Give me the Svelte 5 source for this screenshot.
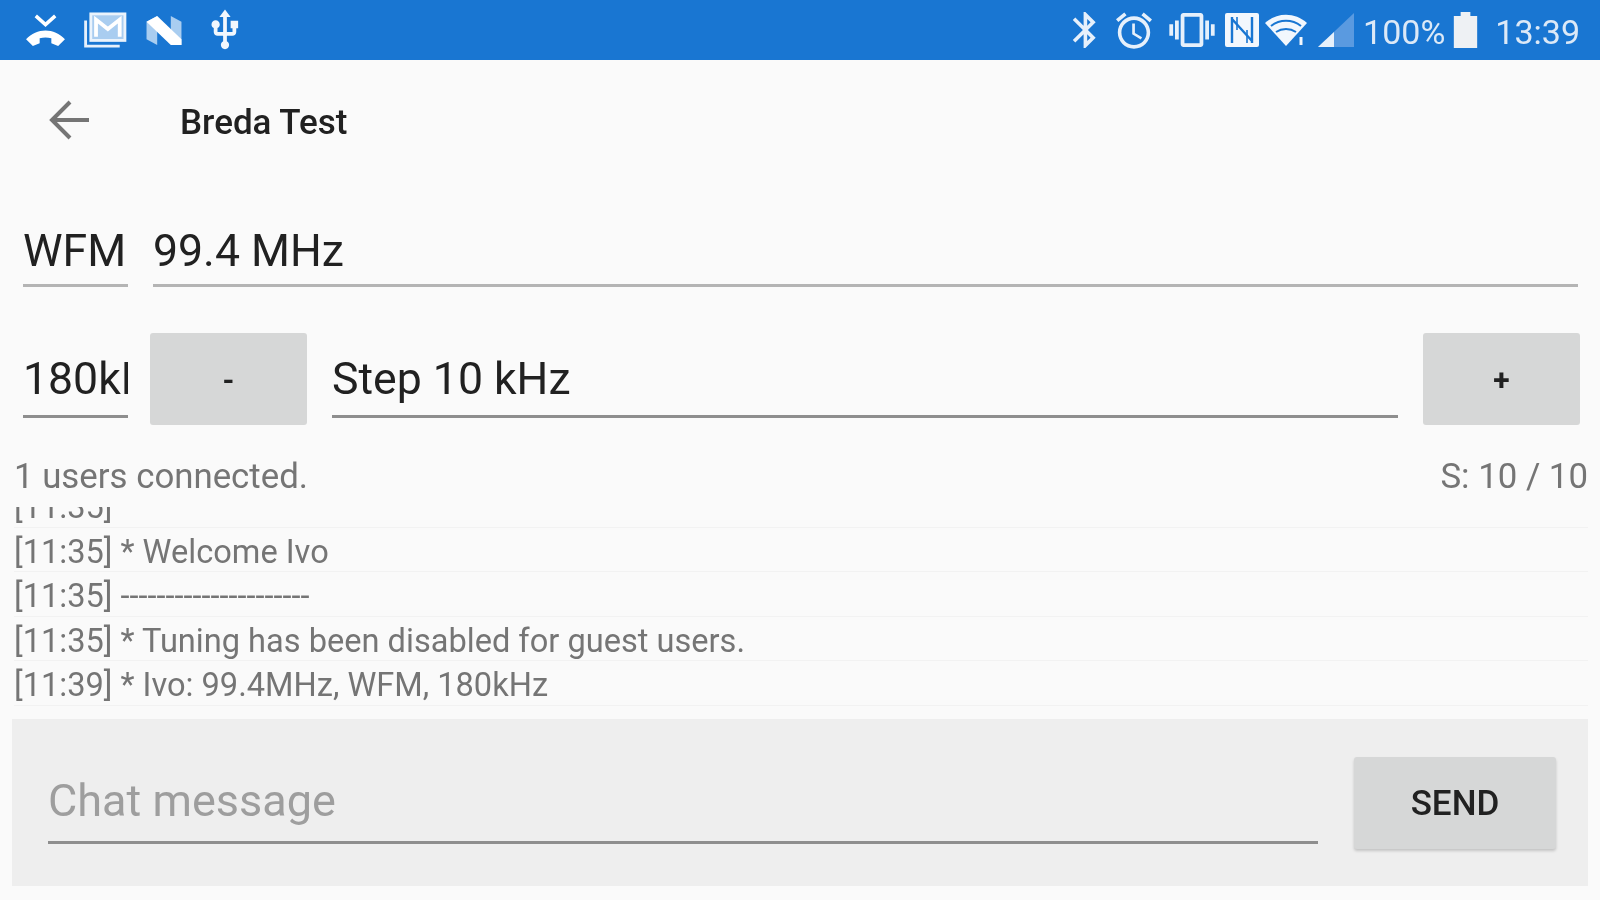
<script lang="ts">
  const messages = [
    '[11:35] * Welcome Ivo',
    '[11:35] ---------------------',
    '[11:35] * Tuning has been disabled for guest users.',
    '[11:39] * Ivo: 99.4MHz, WFM, 180kHz',
  ];
</script>

<div class="screen">
  <header class="status">
    <div class="icons left">
      <svg class="missed" viewBox="0 0 42 36" aria-hidden="true">
        <path d="M11 3l10 9 10-9" fill="none" stroke="#fff" stroke-width="3.6" />
        <path d="M1 27c11-12 29-12 40 0l-7 7-7-3v-5c-4-1-8-1-12 0v5l-7 3z" fill="#fff" />
      </svg>
      <svg class="mail" viewBox="0 0 46 38" aria-hidden="true">
        <path d="M2 9v27h36" fill="none" stroke="#e6f0fb" stroke-width="3" />
        <rect x="7.5" y="2" width="36" height="28" fill="#a9cdf0" stroke="#eaf3fc" stroke-width="3" />
        <path d="M13 26V8l12.500 10L38 8v18" fill="none" stroke="#fff" stroke-width="4" />
      </svg>
      <svg class="nougat" viewBox="0 0 38 34" aria-hidden="true">
        <path d="M1 8l11-6v30L1 26z" fill="#a9cdf0" />
        <path d="M26 2l11 6v24l-11-6z" fill="#a9cdf0" />
        <path d="M1 8l11-6 25 24v6l-11 0z" fill="#fff" />
      </svg>
      <svg class="usb" viewBox="4 1 16 22" aria-hidden="true">
        <path
          d="M15 7v4h1v2h-3V5h2l-3-4-3 4h2v8H8v-2.070c.7-.37 1.200-1.080 1.200-1.930 0-1.210-.99-2.200-2.200-2.200-1.210 0-2.200.99-2.200 2.200 0 .85.5 1.560 1.200 1.930V13c0 1.110.89 2 2 2h3v3.050c-.71.37-1.200 1.100-1.200 1.950 0 1.220.99 2.200 2.200 2.200 1.210 0 2.200-.98 2.200-2.200 0-.85-.49-1.580-1.200-1.950V15h3c1.110 0 2-.89 2-2v-2h1V7h-4z"
          fill="#f2f7fd"
        />
      </svg>
    </div>
    <div class="icons right">
      <svg class="bt" viewBox="5 2 13 20" aria-hidden="true">
        <path
          d="M17.710 7.710L12 2h-1v7.590L6.410 5 5 6.410 10.590 12 5 17.590 6.410 19 11 14.410V22h1l5.710-5.710-4.300-4.290 4.300-4.290zM13 5.830l1.880 1.880L13 9.590V5.830zm1.880 10.460L13 18.170v-3.760l1.880 1.880z"
          fill="#e6f0fb"
        />
      </svg>
      <svg class="alarm" viewBox="2 1.800 20 20.200" aria-hidden="true">
        <path
          d="M22 5.720l-4.600-3.860-1.290 1.530 4.600 3.860L22 5.720zM7.880 3.390L6.600 1.860 2 5.710l1.290 1.530 4.590-3.850zM12.500 8H11v6l4.750 2.850.75-1.230-4-2.370V8zM12 4c-4.970 0-9 4.030-9 9s4.020 9 9 9c4.970 0 9-4.030 9-9s-4.030-9-9-9zm0 16c-3.870 0-7-3.130-7-7s3.130-7 7-7 7 3.130 7 7-3.130 7-7 7z"
          fill="#e6f0fb"
        />
      </svg>
      <svg class="vibrate" viewBox="0 3 24 18" aria-hidden="true">
        <path
          d="M0 15h2V9H0v6zm3 2h2V7H3v10zm19-8v6h2V9h-2zm-3 8h2V7h-2v10zM16.500 3h-9C6.670 3 6 3.670 6 4.500v15c0 .83.67 1.500 1.500 1.500h9c.83 0 1.500-.67 1.500-1.500v-15c0-.83-.67-1.500-1.500-1.500zM16 19H8V5h8v14z"
          fill="#e6f0fb"
        />
      </svg>
      <svg class="nfc" viewBox="0 0 34 34" aria-hidden="true">
        <rect width="34" height="34" rx="2" fill="#f2f7fd" />
        <path d="M7 4v26M27 4v26M7 6l20 22" fill="none" stroke="#1976d2" stroke-width="2.400" />
        <path d="M12 4v13M22 30V17" fill="none" stroke="#1976d2" stroke-width="1.600" />
      </svg>
      <svg class="wifi" viewBox="0 0 42 32" aria-hidden="true">
        <path d="M0 9C12-2 30-2 42 9l-21 23z" fill="#f2f7fd" />
        <path d="M6 12c9-7 21-7 30 0M11 18c6-4 14-4 20 0" fill="none" stroke="#1976d2" stroke-width="2" />
        <path d="M36 23v8" stroke="#f2f7fd" stroke-width="3" />
      </svg>
      <svg class="signal" viewBox="0 0 36 34" aria-hidden="true">
        <path d="M0 34L36 0v34z" fill="#5a9ae0" />
        <path d="M0 34l16-15v15z" fill="#e6f0fb" />
      </svg>
      <span class="pct">100%</span>
      <svg class="battery" viewBox="0 0 24 37" aria-hidden="true">
        <path d="M7 0h10v4h7v33H0V4h7z" fill="#eef1f4" />
      </svg>
      <span class="clock">13:39</span>
    </div>
  </header>

  <div class="toolbar">
    <svg class="back" viewBox="0 0 40 40" aria-hidden="true">
      <path d="M40 20H3M21 2L3 20l18 18" fill="none" stroke="#757575" stroke-width="4" />
    </svg>
    <h1>Breda Test</h1>
  </div>

  <div class="row tune">
    <div class="field mode">WFM</div>
    <div class="field freq">99.4 MHz</div>
  </div>

  <div class="row step">
    <div class="field bw"><span>180kHz</span></div>
    <button class="small">-</button>
    <div class="field stepval">Step 10 kHz</div>
    <button class="small">+</button>
  </div>

  <div class="info">
    <span>1 users connected.</span>
    <span>S: 10 / 10</span>
  </div>

  <div class="log">
    <div class="line clipped">[11:35]</div>
    {#each messages as message}
      <div class="line">{message}</div>
    {/each}
  </div>

  <div class="chat">
    <div class="input">Chat message</div>
    <button class="send">SEND</button>
  </div>
</div>

<style>
  :global(body) {
    background: #fafafa;
  }

  .screen {
    width: 1600px;
    height: 900px;
    overflow: hidden;
    display: flex;
    flex-direction: column;
    background: #fafafa;
    font-family: Roboto, 'Liberation Sans', sans-serif;
    filter: blur(0.5px);
  }

  .status {
    height: 60px;
    flex: none;
    display: flex;
    align-items: center;
    justify-content: space-between;
    background: #1976d2;
    padding: 0 20px 0 25px;
    color: #dce9f7;
    font-size: 34px;
  }

  .icons {
    display: flex;
    align-items: center;
  }

  .missed {
    width: 41px;
    height: 35px;
  }

  .mail {
    width: 45px;
    height: 36px;
    margin-left: 17px;
  }

  .nougat {
    width: 38px;
    height: 33px;
    margin-left: 17px;
  }

  .usb {
    width: 30px;
    height: 42px;
    margin-left: 27px;
  }

  .bt {
    width: 25px;
    height: 36px;
  }

  .alarm {
    width: 36px;
    height: 37px;
    margin-left: 19px;
  }

  .vibrate {
    width: 46px;
    height: 34px;
    margin-left: 17px;
  }

  .nfc {
    width: 34px;
    height: 34px;
    margin-left: 10px;
  }

  .wifi {
    width: 42px;
    height: 32px;
    margin-left: 6px;
  }

  .signal {
    width: 36px;
    height: 34px;
    margin-left: 11px;
  }

  .pct {
    margin: 4px 0 0 9px;
  }

  .battery {
    width: 25px;
    height: 36px;
    margin-left: 8px;
  }

  .clock {
    margin: 4px 0 0 17px;
  }

  .toolbar {
    height: 124px;
    flex: none;
    display: flex;
    align-items: center;
    padding-left: 49px;
  }

  .back {
    width: 40px;
    height: 40px;
    margin-top: -5px;
  }

  h1 {
    margin: 0 0 0 91px;
    font-size: 35px;
    font-weight: 500;
    color: #212121;
  }

  .row {
    display: flex;
    padding: 0 20px 0 23px;
  }

  .tune {
    height: 149px;
    gap: 25px;
    align-items: flex-start;
    padding: 34px 22px 0 23px;
    box-sizing: border-box;
  }

  .field {
    font-size: 44.6px;
    line-height: 66px;
    color: #212121;
    border-bottom: 3px solid #b4b4b4;
    box-sizing: border-box;
    height: 69px;
    white-space: nowrap;
    overflow: hidden;
  }

  .mode {
    width: 105px;
  }

  .freq {
    flex: 1;
  }

  .step {
    height: 92px;
    align-items: flex-start;
  }

  .step .field {
    margin-top: 16px;
    height: 69px;
    line-height: 60px;
    border-bottom-color: #8e8e8e;
  }

  .bw {
    width: 105px;
    flex: none;
  }

  .bw span {
    display: block;
    width: 105px;
    overflow: hidden;
  }

  .step .stepval {
    flex: 1;
    margin: 16px 25px 0;
  }

  .small {
    width: 157px;
    height: 92px;
    flex: none;
    margin: 0;
    padding: 0;
    border: 0;
    border-radius: 3px;
    background: #d6d7d7;
    color: #212121;
    font: 700 30px Roboto, sans-serif;
  }

  .small:first-of-type {
    margin-left: 22px;
  }

  .info {
    display: flex;
    justify-content: space-between;
    padding: 0 12px 0 14px;
    margin-top: 31px;
    font-size: 34.8px;
    line-height: 40px;
    color: #757575;
  }

  .log {
    height: 202px;
    flex: none;
    margin: 11px 12px 0 14px;
    overflow: hidden;
    font-size: 32.6px;
    color: #757575;
  }

  .line {
    height: 44.500px;
    line-height: 48px;
    box-sizing: border-box;
    border-bottom: 1px solid #f2f2f2;
    white-space: nowrap;
  }

  .clipped {
    margin-top: -24px;
  }

  .chat {
    height: 167px;
    flex: none;
    margin: 10px 12px 0 12px;
    display: flex;
    align-items: flex-start;
    background: #eeeeee;
    padding: 0 32px 0 36px;
    box-sizing: border-box;
  }

  .input {
    flex: 1;
    margin-top: 32px;
    height: 93px;
    line-height: 100px;
    box-sizing: border-box;
    font-size: 45px;
    color: #9e9e9e;
    border-bottom: 3px solid #8e8e8e;
  }

  .send {
    width: 202px;
    height: 92px;
    margin: 38px 0 0 36px;
    padding: 0;
    border: 0;
    border-radius: 3px;
    background: #d6d7d7;
    box-shadow: 0 2px 3px rgba(0, 0, 0, 0.18);
    color: #212121;
    font: 500 35px Roboto, sans-serif;
  }
</style>
